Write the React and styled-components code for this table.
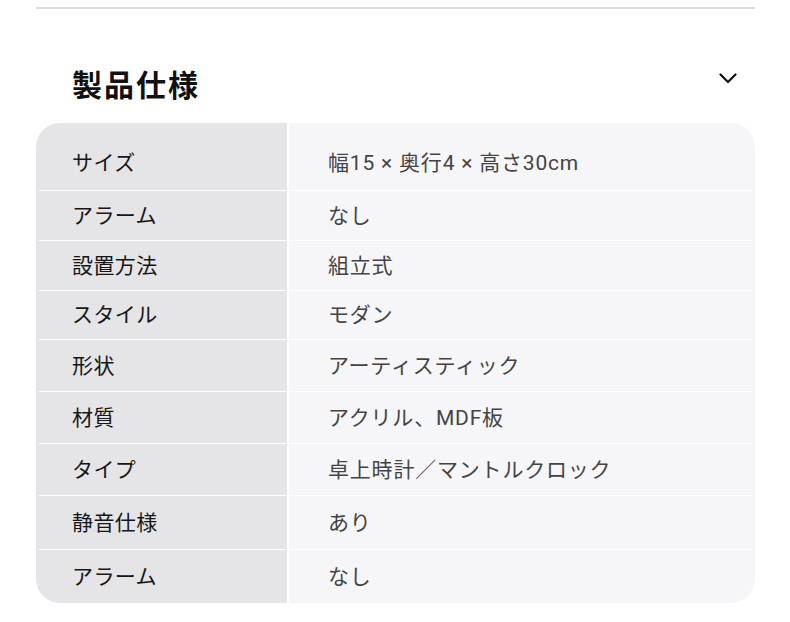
import styled, { createGlobalStyle } from "styled-components";

const GlobalStyle = createGlobalStyle`
  body {
    margin: 0;
    background: #ffffff;
    font-family: Roboto, "Noto Sans CJK JP", sans-serif;
  }
`;

const specs = [
  { label: "サイズ", value: "幅15 × 奥行4 × 高さ30cm", h: 67, top: 12 },
  { label: "アラーム", value: "なし", h: 49 },
  { label: "設置方法", value: "組立式", h: 49 },
  { label: "スタイル", value: "モダン", h: 48 },
  { label: "形状", value: "アーティスティック", h: 51 },
  { label: "材質", value: "アクリル、MDF板", h: 51 },
  { label: "タイプ", value: "卓上時計／マントルクロック", h: 51 },
  { label: "静音仕様", value: "あり", h: 53 },
  { label: "アラーム", value: "なし", h: 53 },
];

export default function App() {
  return (
    <>
      <GlobalStyle />
      <Section>
        <Header>
          <Title>製品仕様</Title>
          <Toggle>
            <svg width="18" height="11" viewBox="0 0 18 11" fill="none">
              <path
                d="M1.5 1.5 L9 9 L16.5 1.5"
                stroke="#111"
                strokeWidth="2.2"
                strokeLinecap="round"
                strokeLinejoin="round"
              />
            </svg>
          </Toggle>
        </Header>

        <Table>
          {specs.map((s, i) => (
            <div key={i}>
              {i > 0 && <Separator />}
              <Row h={s.h} top={s.top || 0}>
                <Label>{s.label}</Label>
                <Value>{s.value}</Value>
              </Row>
            </div>
          ))}
        </Table>
      </Section>
    </>
  );
}

const Section = styled.div`
  margin: 7px 35px 0 36px;
  border-top: 2px solid #dcdcdc;
`;

const Header = styled.div`
  display: flex;
  justify-content: space-between;
  align-items: flex-start;
  height: 114px;
`;

const Title = styled.h2`
  margin: 54px 0 0 36px;
  font-family: "Noto Sans CJK JP", sans-serif;
  font-size: 30px;
  line-height: 40px;
  font-weight: 700;
  letter-spacing: 2px;
  color: #111111;
`;

const Toggle = styled.div`
  margin: 64px 18px 0 0;
  display: flex;
`;

const Table = styled.div`
  border-radius: 24px;
  overflow: hidden;
  background: linear-gradient(
    to right,
    #e5e5e8 0,
    #e5e5e8 251px,
    #ffffff 251px,
    #ffffff 253px,
    #f6f6f8 253px
  );
`;

const Separator = styled.div`
  height: 1px;
  margin: 0 3px;
  background: #ffffff;
`;

const Row = styled.div`
  display: grid;
  grid-template-columns: 253px 1fr;
  align-items: center;
  height: ${(p) => p.h}px;
  padding-top: ${(p) => p.top}px;
  box-sizing: border-box;
  font-size: 21px;
  line-height: 28px;
`;

const Label = styled.div`
  padding-left: 36px;
  letter-spacing: 0.4px;
  color: #161616;
`;

const Value = styled.div`
  padding-left: 39px;
  letter-spacing: 0.8px;
  color: #444444;
`;
